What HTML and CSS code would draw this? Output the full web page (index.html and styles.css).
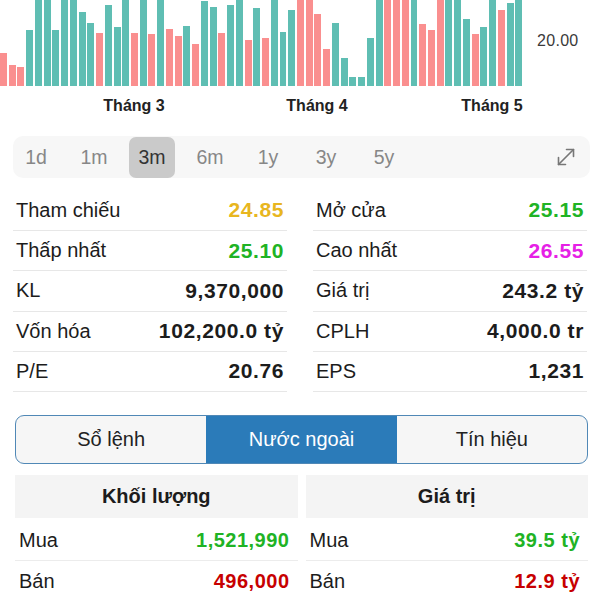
FILE: index.html
```html
<!DOCTYPE html>
<html lang="vi">
<head>
<meta charset="utf-8">
<title>Cổ phiếu</title>
<link rel="stylesheet" href="styles.css">
</head>
<body>
<div class="chart">
  <div class="plot">
    <div class="bars">
      <i class="bar dn" style="height:33px"></i><i class="bar dn" style="height:21px"></i><i class="bar dn" style="height:19px"></i><i class="bar up" style="height:56px"></i><i class="bar up" style="height:86px"></i><i class="bar up" style="height:86px"></i><i class="bar up" style="height:56px"></i><i class="bar up" style="height:86px"></i><i class="bar up" style="height:86px"></i><i class="bar up" style="height:74px"></i>
      <i class="bar up" style="height:63px"></i><i class="bar dn" style="height:53px"></i><i class="bar up" style="height:81px"></i><i class="bar up" style="height:59px"></i><i class="bar up" style="height:86px"></i><i class="bar dn" style="height:53px"></i><i class="bar up" style="height:86px"></i><i class="bar dn" style="height:52px"></i><i class="bar up" style="height:86px"></i><i class="bar dn" style="height:57px"></i>
      <i class="bar dn" style="height:50px"></i><i class="bar up" style="height:60px"></i><i class="bar dn" style="height:42px"></i><i class="bar up" style="height:85px"></i><i class="bar up" style="height:79px"></i><i class="bar dn" style="height:53px"></i><i class="bar up" style="height:81px"></i><i class="bar up" style="height:86px"></i><i class="bar dn" style="height:46px"></i><i class="bar up" style="height:78px"></i>
      <i class="bar dn" style="height:48px"></i><i class="bar up" style="height:86px"></i><i class="bar up" style="height:54px"></i><i class="bar up" style="height:76px"></i><i class="bar dn" style="height:86px"></i><i class="bar dn" style="height:86px"></i><i class="bar dn" style="height:72px"></i><i class="bar dn" style="height:37px"></i><i class="bar up" style="height:63px"></i><i class="bar up" style="height:28px"></i>
      <i class="bar up" style="height:9px"></i><i class="bar up" style="height:9px"></i><i class="bar up" style="height:48px"></i><i class="bar up" style="height:86px"></i><i class="bar dn" style="height:86px"></i><i class="bar dn" style="height:86px"></i><i class="bar dn" style="height:86px"></i><i class="bar up" style="height:86px"></i><i class="bar dn" style="height:62px"></i><i class="bar dn" style="height:56px"></i>
      <i class="bar dn" style="height:86px"></i><i class="bar up" style="height:86px"></i><i class="bar up" style="height:86px"></i><i class="bar up" style="height:67px"></i><i class="bar dn" style="height:52px"></i><i class="bar up" style="height:59px"></i><i class="bar up" style="height:86px"></i><i class="bar dn" style="height:76px"></i><i class="bar up" style="height:83px"></i><i class="bar up" style="height:86px"></i>
    </div>
    <div class="axis"><span class="axis-label">20.00</span></div>
  </div>
  <div class="months">
    <span class="month" style="left:134px">Tháng 3</span>
    <span class="month" style="left:317px">Tháng 4</span>
    <span class="month" style="left:492px">Tháng 5</span>
  </div>
</div>

<div class="periods">
  <span class="period">1d</span>
  <span class="period">1m</span>
  <span class="period active">3m</span>
  <span class="period">6m</span>
  <span class="period">1y</span>
  <span class="period">3y</span>
  <span class="period">5y</span>
  <svg class="expand" width="20" height="20" viewBox="0 0 20 20" fill="none" stroke="#777" stroke-width="1.6" stroke-linecap="round" stroke-linejoin="round">
    <line x1="2.5" y1="17.5" x2="17.5" y2="2.5"/>
    <polyline points="10.5,2.5 17.5,2.5 17.5,9.5"/>
    <polyline points="2.5,10.5 2.5,17.5 9.5,17.5"/>
  </svg>
</div>

<div class="stats">
  <div class="row"><span class="lbl">Tham chiếu</span><span class="val ref">24.85</span></div>
  <div class="row"><span class="lbl">Mở cửa</span><span class="val up-c">25.15</span></div>
  <div class="row"><span class="lbl">Thấp nhất</span><span class="val up-c">25.10</span></div>
  <div class="row"><span class="lbl">Cao nhất</span><span class="val ceil">26.55</span></div>
  <div class="row"><span class="lbl">KL</span><span class="val">9,370,000</span></div>
  <div class="row"><span class="lbl">Giá trị</span><span class="val">243.2 tỷ</span></div>
  <div class="row"><span class="lbl">Vốn hóa</span><span class="val">102,200.0 tỷ</span></div>
  <div class="row"><span class="lbl">CPLH</span><span class="val">4,000.0 tr</span></div>
  <div class="row"><span class="lbl">P/E</span><span class="val">20.76</span></div>
  <div class="row"><span class="lbl">EPS</span><span class="val">1,231</span></div>
</div>

<div class="tabs">
  <span class="tab">Sổ lệnh</span>
  <span class="tab active">Nước ngoài</span>
  <span class="tab">Tín hiệu</span>
</div>

<div class="foreign">
  <div class="ftable">
    <div class="fhead">Khối lượng</div>
    <div class="frow first"><span class="lbl">Mua</span><span class="fval up-c">1,521,990</span></div>
    <div class="frow"><span class="lbl">Bán</span><span class="fval dn-c">496,000</span></div>
  </div>
  <div class="ftable">
    <div class="fhead">Giá trị</div>
    <div class="frow first"><span class="lbl">Mua</span><span class="fval up-c">39.5 tỷ</span></div>
    <div class="frow"><span class="lbl">Bán</span><span class="fval dn-c">12.9 tỷ</span></div>
  </div>
</div>
</body>
</html>
```
FILE: styles.css
```css
* { box-sizing: border-box; }
html, body { margin: 0; padding: 0; background: #fff; }
body {
  width: 600px;
  height: 600px;
  overflow: hidden;
  font-family: "Liberation Sans", Arial, sans-serif;
  color: #1c1c1c;
}

/* chart */
.plot { display: flex; height: 86px; }
.bars {
  width: 522px;
  height: 86px;
  display: flex;
  align-items: flex-end;
  gap: 1.78px;
  overflow: hidden;
}
.bar { flex: 1; display: block; }
.bar.up { background: #5fbeb3; }
.bar.dn { background: #fa8f8f; }
.axis { flex: 1; padding: 32px 0 0 15px; }
.axis-label { font-size: 16px; line-height: 18px; color: #3a3a3a; letter-spacing: 0.3px; }

.months { position: relative; height: 40px; }
.month {
  position: absolute;
  top: 11px;
  transform: translateX(-50%);
  font-size: 16px;
  line-height: 18px;
  font-weight: bold;
  color: #222;
  white-space: nowrap;
}

/* periods */
.periods {
  margin: 10px 10px 0 13px;
  height: 42px;
  background: #f7f7f7;
  border-radius: 10px;
  display: flex;
  align-items: center;
  gap: 12px;
}
.period {
  width: 46px;
  height: 41px;
  display: flex;
  align-items: center;
  justify-content: center;
  font-size: 19.5px;
  color: #878787;
  border-radius: 7px;
}
.period.active { background: #cacaca; color: #333; }
.expand { margin-left: auto; margin-right: 14px; }

/* stats */
.stats {
  margin-top: 12.75px;
  padding: 0 13px;
  display: grid;
  grid-template-columns: 1fr 1fr;
  column-gap: 26px;
}
.row {
  height: 40.25px;
  display: flex;
  align-items: center;
  justify-content: space-between;
  padding: 0 3px;
  border-bottom: 1px solid #e7e7e7;
}
.lbl { font-size: 20px; color: #1c1c1c; }
.val { font-size: 21px; font-weight: bold; letter-spacing: 0.6px; color: #1c1c1c; }
.ref { color: #e8b61f; }
.up-c { color: #20b324; }
.ceil { color: #e620e6; }
.dn-c { color: #c70000; }

/* tabs */
.tabs {
  margin: 23px 12px 0 15px;
  height: 49px;
  border: 1.5px solid #5088b6;
  border-radius: 9px;
  overflow: hidden;
  display: grid;
  grid-template-columns: 1fr 1fr 1fr;
  background: #f6f6f6;
}
.tab {
  display: flex;
  align-items: center;
  justify-content: center;
  font-size: 20px;
  color: #222;
}
.tab.active { background: #2b7bb9; color: #fff; }

/* foreign */
.foreign {
  margin: 11px 12px 0 15px;
  display: grid;
  grid-template-columns: 1fr 1fr;
  column-gap: 8px;
}
.fhead {
  height: 43px;
  background: #f4f4f4;
  display: flex;
  align-items: center;
  justify-content: center;
  font-size: 20px;
  font-weight: bold;
  color: #1c1c1c;
}
.frow {
  height: 41px;
  display: flex;
  align-items: center;
  justify-content: space-between;
  padding: 0 8px 0 4px;
  border-bottom: 1px solid #ececec;
}
.frow.first { margin-top: 2px; }
.fval { font-size: 20px; font-weight: bold; letter-spacing: 0.5px; }
```
